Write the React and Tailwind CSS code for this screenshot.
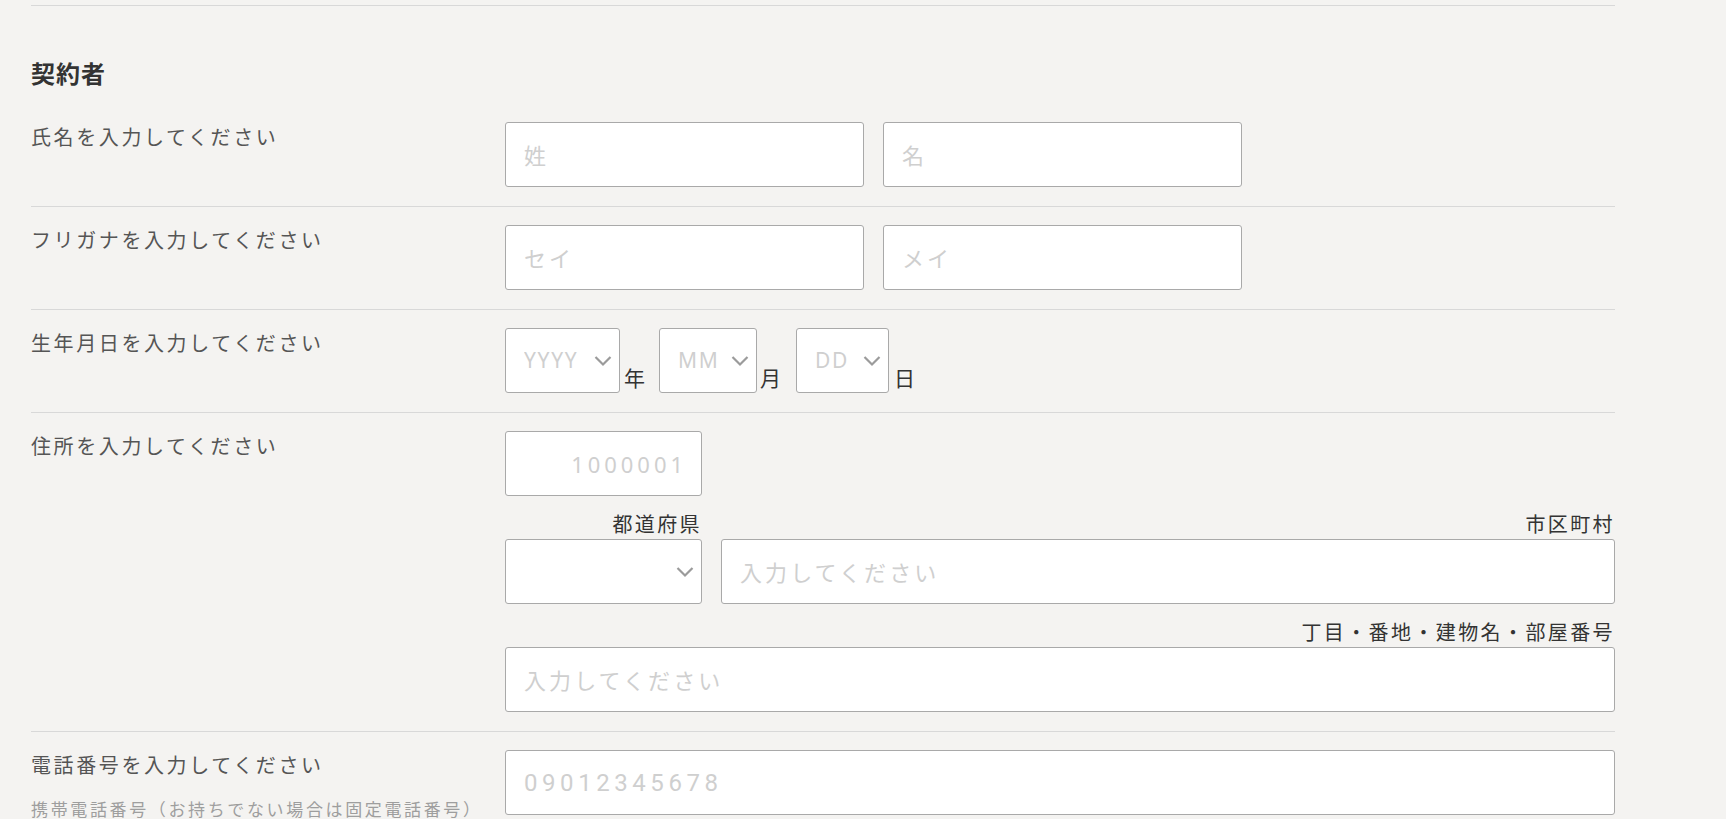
import React from 'react';

// 契約者 form block
function TextInput({ placeholder, className = '' }) {
  return (
    <input
      type="text"
      placeholder={placeholder}
      className={`h-[65px] min-w-0 rounded-[3px] border border-[#a9a9a9] bg-white px-[18px] text-[22px] tracking-[0.14em] text-[#333] outline-none placeholder:text-[#cfcfcf] ${className}`}
    />
  );
}

function Chevron() {
  return (
    <svg
      className="pointer-events-none absolute right-[8px] top-1/2 -translate-y-1/2"
      width="18"
      height="11"
      viewBox="0 0 18 11"
    >
      <path d="M1.5 1.5 9 9l7.5-7.5" fill="none" stroke="#9b9b9b" strokeWidth="2.2" />
    </svg>
  );
}

function SelectBox({ placeholder = '', className = '' }) {
  return (
    <div className={`relative h-[65px] shrink-0 ${className}`}>
      <select
        defaultValue=""
        className="h-full w-full appearance-none rounded-[3px] border border-[#a9a9a9] bg-white pl-[18px] pr-[30px] text-[21px] tracking-[0.08em] text-[#cfcfcf] outline-none"
      >
        <option value="" disabled>
          {placeholder}
        </option>
      </select>
      <Chevron />
    </div>
  );
}

function Row({ label, sub, children, first = false, last = false }) {
  return (
    <div className={`flex ${first ? 'pt-0' : 'pt-[18px]'} ${last ? 'pb-0' : 'pb-[19px] border-b border-[#d8d8d8]'}`}>
      <div className="w-[474px] shrink-0">
        <div className="text-[20px] leading-[32px] tracking-[0.13em] text-[#555]">{label}</div>
        {sub && (
          <div className="mt-[14px] text-[17px] leading-[28px] tracking-[0.155em] text-[#9e9e9e]">{sub}</div>
        )}
      </div>
      <div className="flex-1">{children}</div>
    </div>
  );
}

function FieldLabel({ children }) {
  return (
    <div className="text-right text-[20px] leading-[24px] tracking-[0.12em] text-[#333]">{children}</div>
  );
}

export default function App() {
  return (
    <div className="h-[819px] w-[1726px] overflow-hidden bg-[#f4f3f1] font-['Noto_Sans','Noto_Sans_CJK_JP',sans-serif]">
      <div className="ml-[31px] w-[1584px]">
        <div className="h-[5px]" />
        <div className="border-t border-[#d8d8d8]" />

        <h2 className="mb-[33px] pt-[53px] text-[24px] font-bold leading-[30px] tracking-[0.04em] text-[#333]">
          契約者
        </h2>

        <Row label="氏名を入力してください" first>
          <div className="flex gap-[19px]">
            <TextInput placeholder="姓" className="w-[359px]" />
            <TextInput placeholder="名" className="w-[359px]" />
          </div>
        </Row>

        <Row label="フリガナを入力してください">
          <div className="flex gap-[19px]">
            <TextInput placeholder="セイ" className="w-[359px]" />
            <TextInput placeholder="メイ" className="w-[359px]" />
          </div>
        </Row>

        <Row label="生年月日を入力してください">
          <div className="flex items-end">
            <SelectBox placeholder="YYYY" className="w-[115px]" />
            <span className="mb-[2px] ml-[4px] mr-[14px] text-[21px] leading-[26px] text-[#333]">年</span>
            <SelectBox placeholder="MM" className="w-[98px]" />
            <span className="mb-[2px] ml-[3px] mr-[15px] text-[21px] leading-[26px] text-[#333]">月</span>
            <SelectBox placeholder="DD" className="w-[93px]" />
            <span className="mb-[2px] ml-[5px] text-[21px] leading-[26px] text-[#333]">日</span>
          </div>
        </Row>

        <Row label="住所を入力してください">
          <div className="flex flex-col">
            <TextInput placeholder="1000001" className="w-[197px] pr-[14px] text-right tracking-[0.18em]" />
            <div className="mt-[17px] flex gap-[19px]">
              <div className="w-[197px] shrink-0">
                <FieldLabel>都道府県</FieldLabel>
                <SelectBox className="mt-[2px] w-[197px]" />
              </div>
              <div className="flex flex-1 flex-col">
                <FieldLabel>市区町村</FieldLabel>
                <TextInput placeholder="入力してください" className="mt-[2px] w-full" />
              </div>
            </div>
            <div className="mt-[17px] flex flex-col">
              <FieldLabel>丁目・番地・建物名・部屋番号</FieldLabel>
              <TextInput placeholder="入力してください" className="mt-[2px] w-full" />
            </div>
          </div>
        </Row>

        <Row label="電話番号を入力してください" sub="携帯電話番号（お持ちでない場合は固定電話番号）" last>
          <input
            type="tel"
            placeholder="09012345678"
            className="h-[65px] w-full rounded-[3px] border border-[#a9a9a9] bg-white px-[18px] font-['Roboto',sans-serif] text-[24px] tracking-[0.19em] text-[#333] outline-none placeholder:text-[#cfcfcf]"
          />
        </Row>
      </div>
    </div>
  );
}
